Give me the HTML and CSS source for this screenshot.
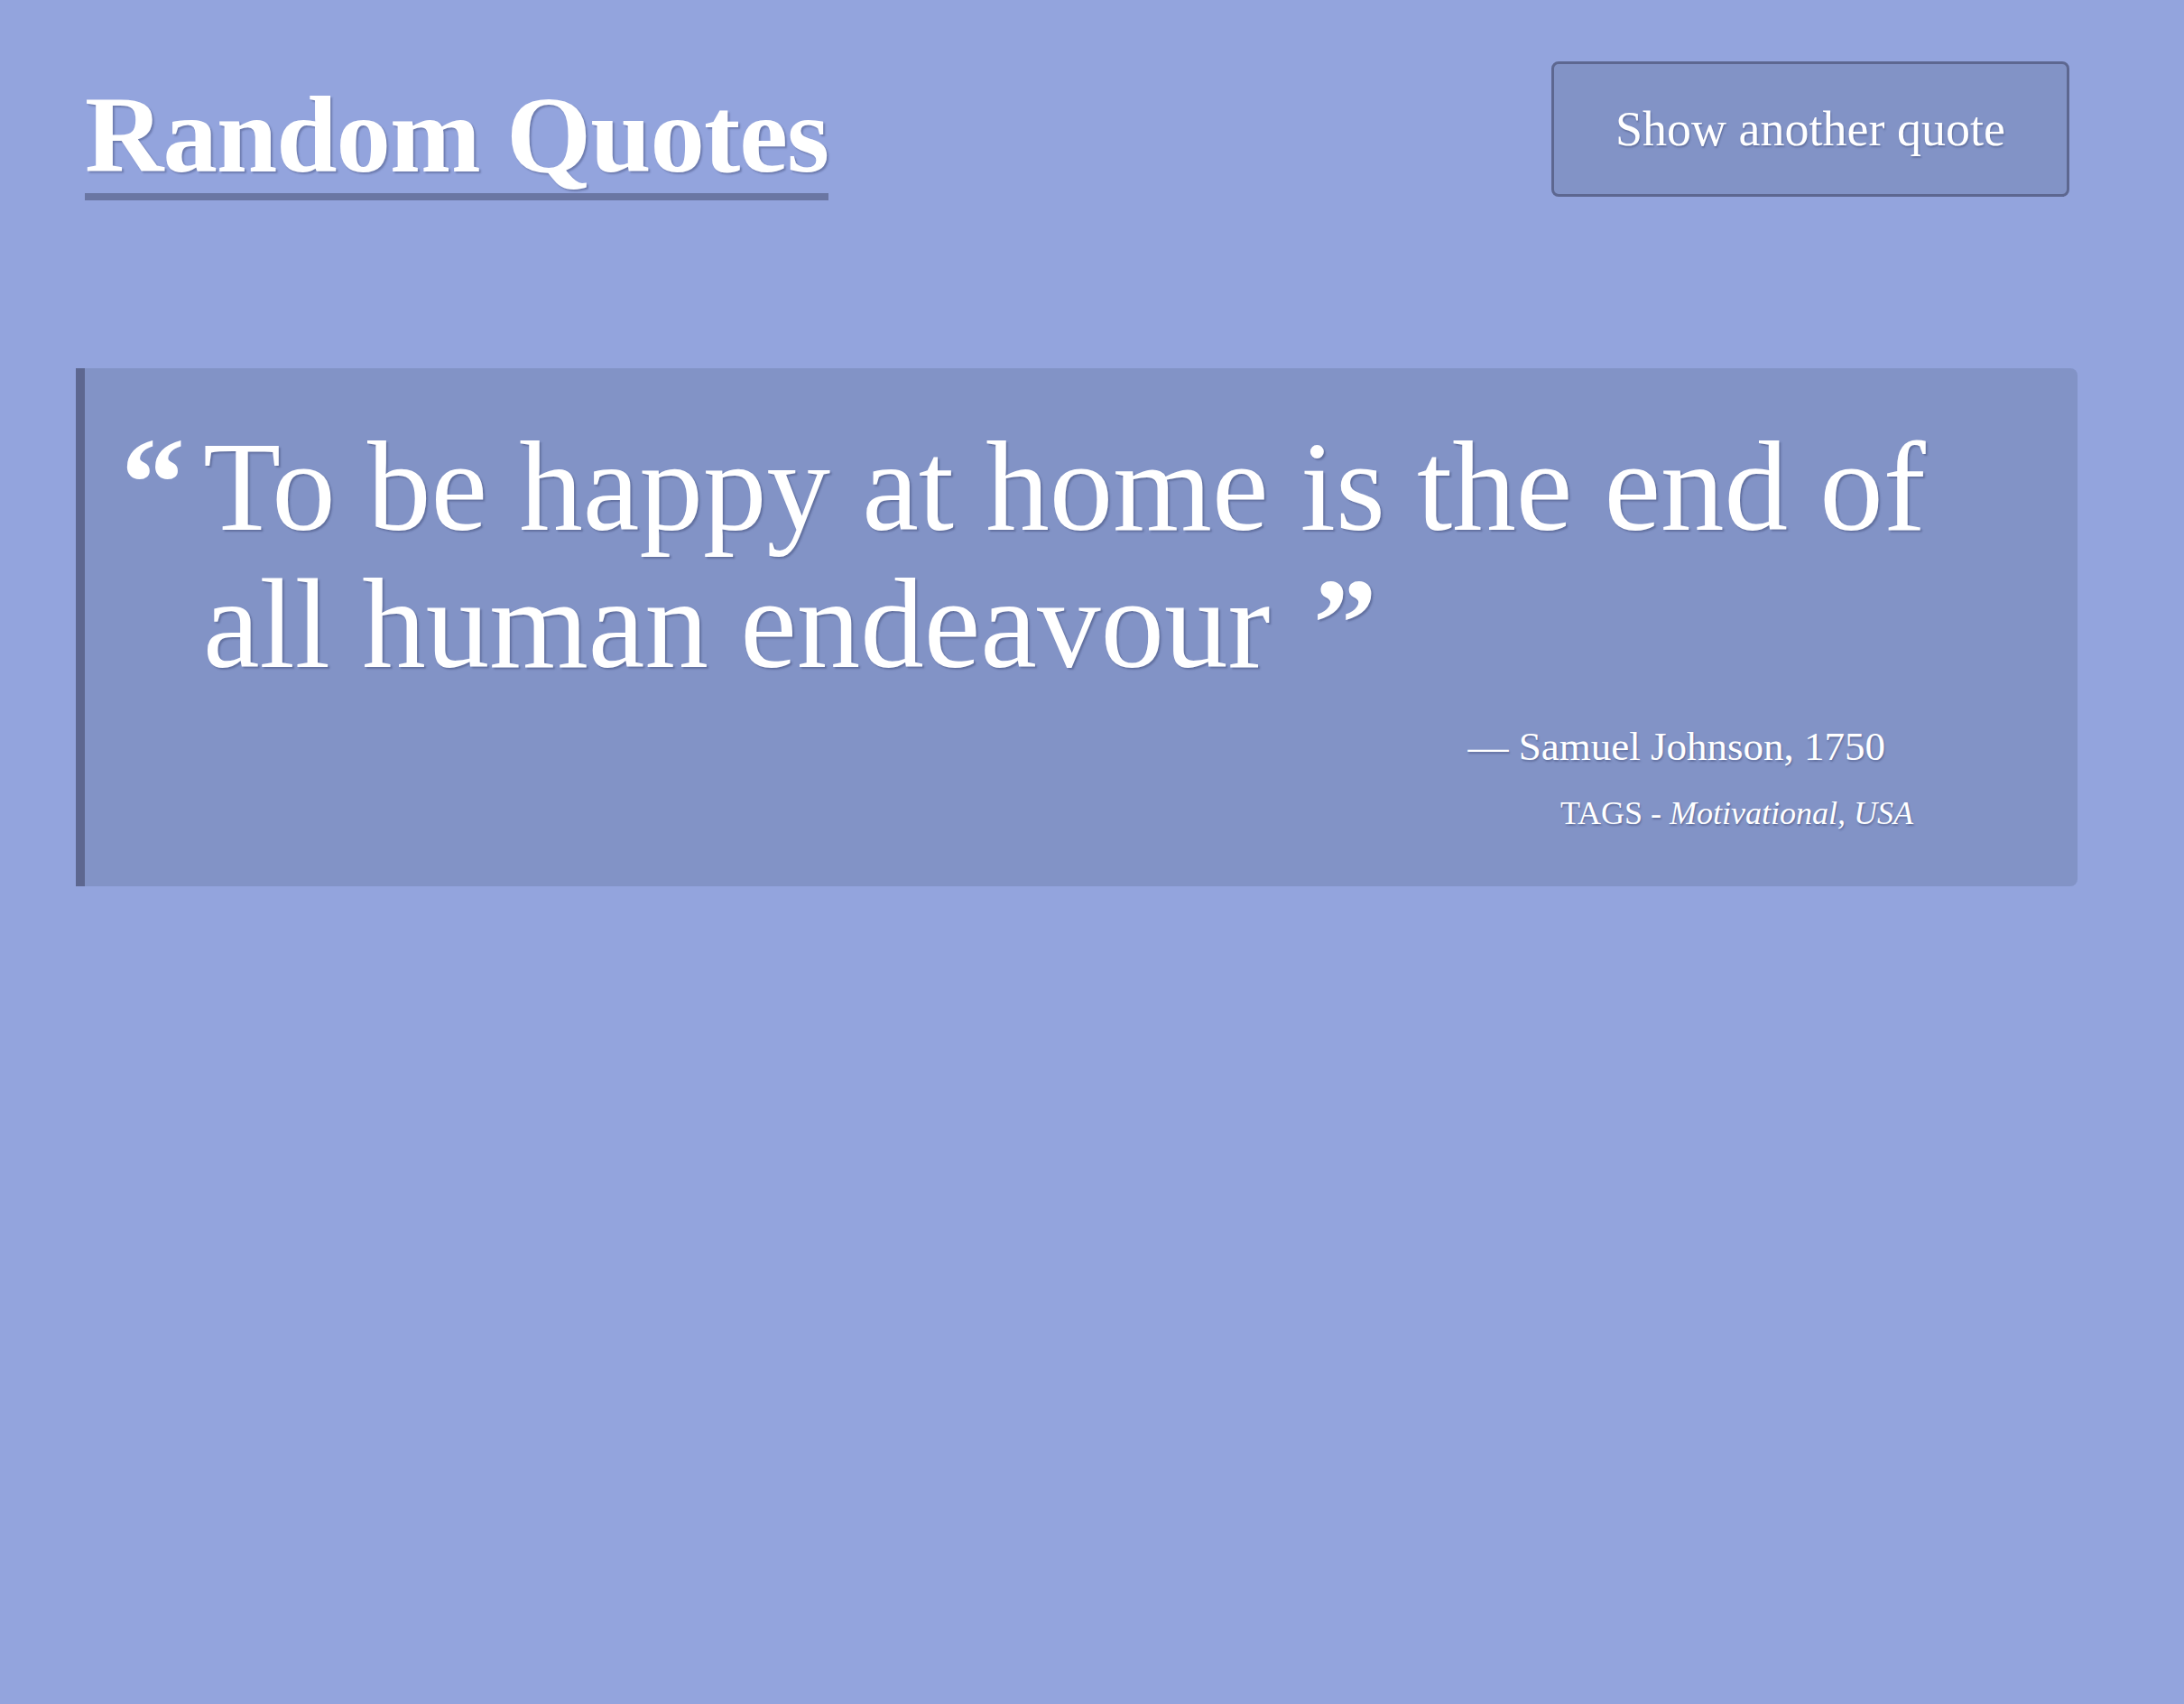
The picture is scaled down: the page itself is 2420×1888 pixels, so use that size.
FILE: index.html
```html
<!DOCTYPE html>
<html lang="en">
<head>
<meta charset="utf-8">
<title>Random Quotes</title>
<link rel="stylesheet" href="styles.css">
</head>
<body>
<header class="top">
  <h1 class="title">Random Quotes</h1>
  <button class="next" type="button">Show another quote</button>
</header>
<main class="content">
  <blockquote class="card">
    <div class="quote-row">
      <span class="mark open">&ldquo;</span>
      <p class="quote-text">To be happy at home is the end of all human endeavour <span class="mark close">&rdquo;</span></p>
    </div>
    <p class="author">&mdash; Samuel Johnson, 1750</p>
    <p class="tags">TAGS - <em>Motivational, USA</em></p>
  </blockquote>
</main>
</body>
</html>
```
FILE: styles.css
```css
html, body {
  margin: 0;
  padding: 0;
}
body {
  background: #93a4dd;
  color: #ffffff;
  font-family: "Liberation Serif", "Times New Roman", serif;
  min-height: 1888px;
  padding: 0 118px 0 84px;
  box-sizing: border-box;
}
.top {
  display: flex;
  justify-content: space-between;
  align-items: flex-start;
  padding-top: 68px;
  padding-left: 10px;
}
.title {
  margin: 21px 0 0 0;
  padding-bottom: 4px;
  font-size: 121px;
  line-height: 1;
  font-weight: 700;
  letter-spacing: -1px;
  border-bottom: 8px solid #6a76a3;
  text-shadow: 2px 2px 2px rgba(40, 50, 90, 0.35);
}
.next {
  width: 574px;
  height: 150px;
  margin-right: 9px;
  background: #8293c6;
  border: 3px solid #5d6790;
  border-radius: 8px;
  color: #ffffff;
  font-family: "Liberation Serif", "Times New Roman", serif;
  font-size: 54px;
  text-shadow: 1px 2px 2px rgba(40, 50, 90, 0.35);
  padding: 0;
}
.content {
  margin-top: 186px;
}
.card {
  margin: 0;
  background: #8293c6;
  border-left: 10px solid #5d6790;
  border-radius: 0 8px 8px 0;
  padding: 55px 0 59px 0;
}
.quote-row {
  display: flex;
  align-items: flex-start;
}
.mark {
  font-weight: 700;
  font-size: 142px;
}
.open {
  line-height: 152px;
  margin: -4px 0 0 40px;
  width: 91px;
  flex: none;
}
.close {
  line-height: 0;
  margin-left: 12px;
}
.quote-text {
  margin: 0;
  width: 1990px;
  font-size: 141px;
  line-height: 152px;
  text-shadow: 2px 2px 2px rgba(40, 50, 90, 0.35);
}
.author {
  margin: 33px 0 0 0;
  padding-right: 213px;
  text-align: right;
  font-size: 45px;
  line-height: 1.2;
  text-shadow: 1px 2px 2px rgba(40, 50, 90, 0.35);
}
.tags {
  margin: 26px 0 0 0;
  padding-right: 182px;
  text-align: right;
  font-size: 36px;
  line-height: 1.2;
  text-shadow: 1px 2px 2px rgba(40, 50, 90, 0.35);
}
.tags em {
  font-style: italic;
}
```
